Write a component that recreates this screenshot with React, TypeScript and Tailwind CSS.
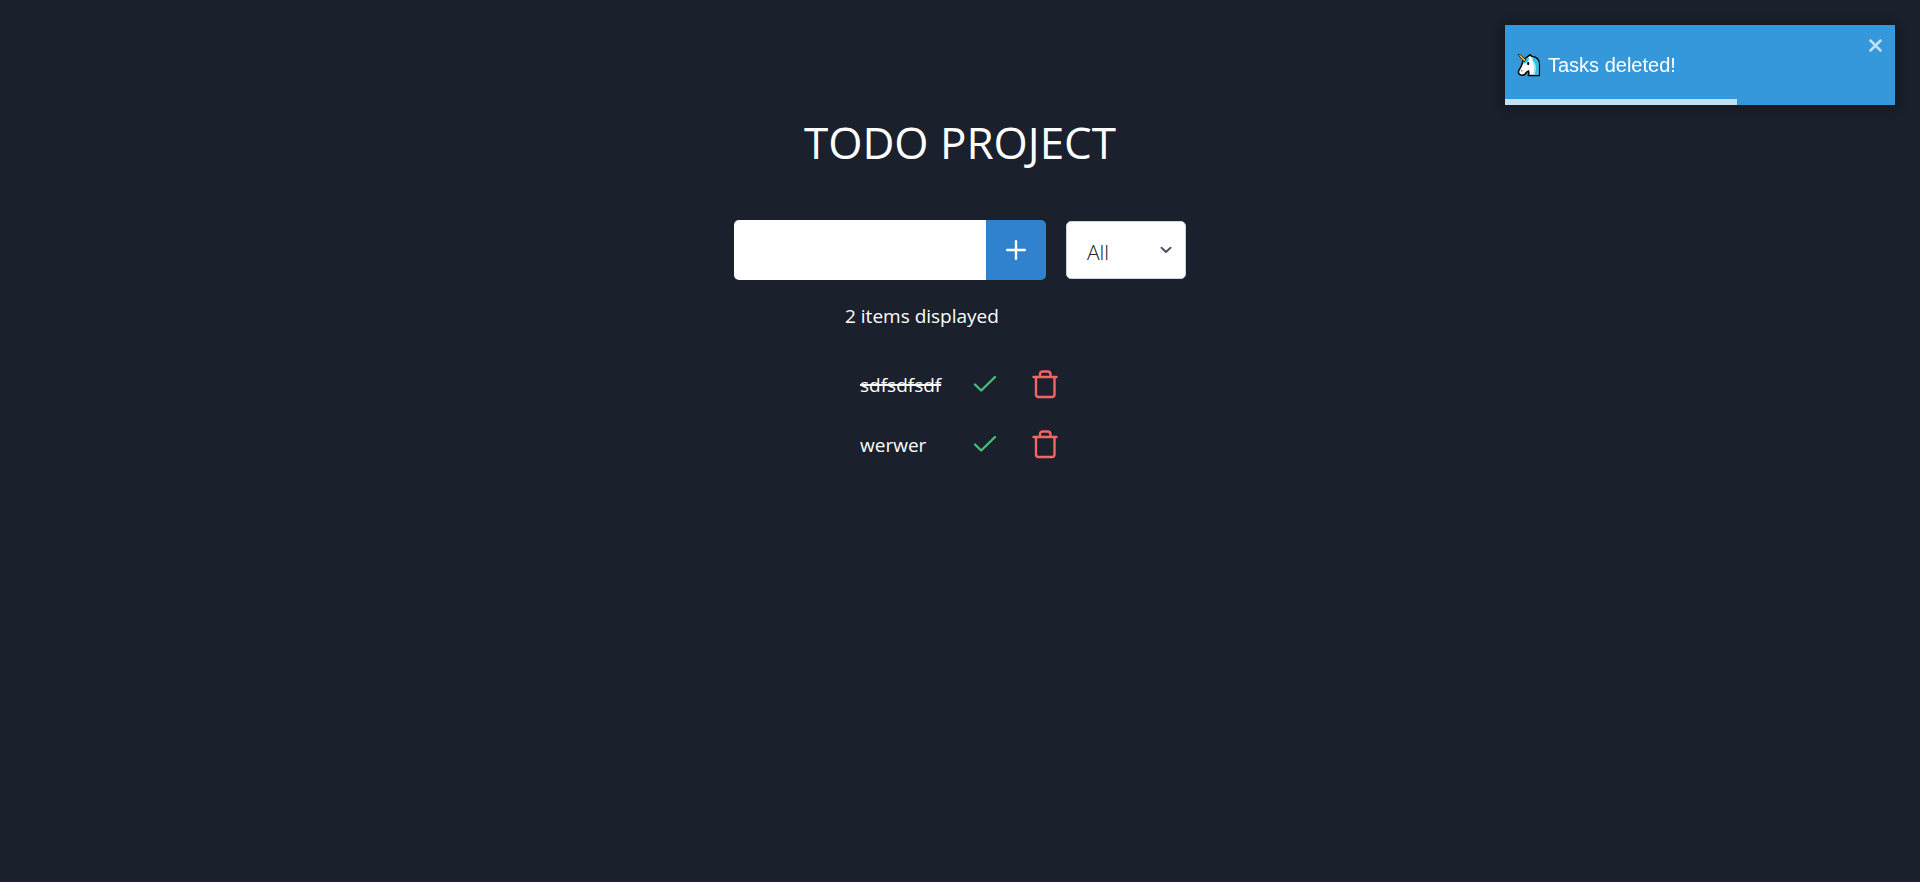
import { useState } from "react";

type Task = { id: number; title: string; done: boolean };

const TASKS: Task[] = [
  { id: 1, title: "sdfsdfsdf", done: true },
  { id: 2, title: "werwer", done: false },
];

function UnicornIcon() {
  return (
    <svg viewBox="0 0 24 24" className="size-6 shrink-0" aria-hidden="true">
      <path
        d="M6.500 7 10 4.200 13 1.800 15 3.400C19.500 3.800 22.300 7 22.300 11.500V22.400H11.300C12.200 20.500 12.300 19.300 11.600 18L9.300 19.300C8.600 21.300 6.600 22.500 4.500 22.200 2.200 21.800 1 20.200 1.600 18L4.300 13Z"
        fill="#fff"
        stroke="#000"
        strokeWidth="1.500"
        strokeLinejoin="round"
      />
      <path d="M15 4.200C19.200 4.600 21.500 7.600 21.500 11.500V21.600H17.500C18.800 17.500 18.600 13.500 17 10 16 8 15.500 6.500 15 4.200Z" fill="#1fc4e8" />
      <path d="M15.500 7C18 9.500 19 12 18.800 15 18.700 17.500 18.300 19.500 17.700 21.600H16C17.300 17 17.500 12.500 15.500 8.500Z" fill="#9be9f7" />
      <path d="M6.300 9.800C7.500 6.500 9.500 5 12.300 4.800 12.200 7.500 10.500 9.500 7 11Z" fill="#2fc8ea" />
      <path d="M1.100 1.900 3 1.300 9 6.800 7.200 8.800Z" fill="#f9b62a" stroke="#000" strokeWidth="0.700" strokeLinejoin="round" />
      <ellipse cx="11.200" cy="10.500" rx="1.100" ry="1.700" fill="#000" />
      <circle cx="4.700" cy="17.800" r="0.800" fill="#666" />
    </svg>
  );
}

function Toast({ onClose }: { onClose: () => void }) {
  return (
    <div
      role="alert"
      className="fixed top-[25px] right-[25px] flex h-20 w-[390px] items-center bg-[#3498db] px-3 font-['Liberation_Sans',Arial,sans-serif] text-xl text-white shadow-[0_1px_12px_2px_rgba(0,0,0,0.3)]"
    >
      <UnicornIcon />
      <span className="ml-[7px]">Tasks deleted!</span>
      <button type="button" aria-label="close" onClick={onClose} className="absolute top-[14px] right-[13px] text-white/70">
        <svg viewBox="0 0 13 13" className="size-[13px]" fill="none" stroke="currentColor" strokeWidth="2.500" strokeLinecap="round">
          <path d="M1.500 1.500 11.500 11.500M11.500 1.500 1.500 11.500" />
        </svg>
      </button>
      <div className="absolute bottom-0 left-0 h-[6px] w-[232px] bg-white/70" />
    </div>
  );
}

function CheckIcon() {
  return (
    <svg viewBox="0 0 30 30" className="size-[30px]" fill="none" stroke="#48bb78" strokeWidth="2.400" strokeLinecap="round" strokeLinejoin="round">
      <path d="M5 15.500 11.200 21.500 25 8" />
    </svg>
  );
}

function TrashIcon() {
  return (
    <svg viewBox="0 0 30 30" className="size-[30px]" fill="none" stroke="#f56565" strokeWidth="2.400" strokeLinecap="round" strokeLinejoin="round">
      <path d="M3.500 8H26.500M6 8V25.500Q6 28 8.500 28H22Q24.500 28 24.500 25.500V8M10 8V5.500Q10 2.500 13 2.500H17.500Q20.500 2.500 20.500 5.500V8" />
    </svg>
  );
}

export default function App() {
  const [tasks, setTasks] = useState(TASKS);
  const [title, setTitle] = useState("");
  const [filter, setFilter] = useState("all");
  const [toast, setToast] = useState(true);

  const shown = tasks.filter((t) => filter === "all" || (filter === "completed") === t.done);

  const add = () => {
    if (!title.trim()) return;
    setTasks([...tasks, { id: Date.now(), title, done: false }]);
    setTitle("");
  };

  return (
    <main className="flex min-h-screen flex-col items-center bg-[#1a202c] pt-27 font-['Open_Sans','Noto_Sans',sans-serif] text-[19px] leading-8 text-white">
      <h1 className="text-[44px] leading-[68px]">TODO PROJECT</h1>

      <form
        className="mt-11 flex items-center gap-5"
        onSubmit={(e) => {
          e.preventDefault();
          add();
        }}
      >
        <div className="flex h-[60px]">
          <input
            type="text"
            aria-label="New task"
            value={title}
            onChange={(e) => setTitle(e.target.value)}
            className="w-[252px] rounded-l-[5px] bg-white px-4 text-gray-800 outline-none"
          />
          <button type="submit" aria-label="Add task" className="flex w-[60px] items-center justify-center rounded-r-[5px] bg-[#3182ce]">
            <svg viewBox="0 0 20 20" className="size-5" stroke="#fff" strokeWidth="2.400" strokeLinecap="round">
              <path d="M10 1.200V18.800M1.200 10H18.800" />
            </svg>
          </button>
        </div>
        <div className="relative">
          <select
            aria-label="Filter tasks"
            value={filter}
            onChange={(e) => setFilter(e.target.value)}
            className="h-[58px] w-[120px] appearance-none rounded-[5px] border border-[#cbd5e0] bg-white pt-1 pl-5 text-[21px] font-light text-[#1a202c] outline-none"
          >
            <option value="all">All</option>
            <option value="completed">Completed</option>
            <option value="uncompleted">Uncompleted</option>
          </select>
          <svg viewBox="0 0 12 8" className="pointer-events-none absolute top-[25px] right-[14px] h-2 w-3" fill="none" stroke="#4a5568" strokeWidth="2" strokeLinecap="round" strokeLinejoin="round">
            <path d="M1.500 1.800 6 6 10.500 1.800" />
          </svg>
        </div>
      </form>

      <section className="mt-5">
        <p>{shown.length} items displayed</p>
        <ul className="mt-[22px]">
          {shown.map((task) => (
            <li key={task.id} className="flex h-[60px] items-center pl-[15px]">
              <span className={task.done ? "w-[95px] pt-[2px] line-through decoration-2" : "w-[95px] pt-[2px]"}>{task.title}</span>
              <button
                type="button"
                aria-label={`Complete ${task.title}`}
                onClick={() => setTasks(tasks.map((t) => (t.id === task.id ? { ...t, done: !t.done } : t)))}
                className="flex size-[60px] items-center justify-center"
              >
                <CheckIcon />
              </button>
              <button
                type="button"
                aria-label={`Delete ${task.title}`}
                onClick={() => setTasks(tasks.filter((t) => t.id !== task.id))}
                className="flex size-[60px] items-center justify-center"
              >
                <TrashIcon />
              </button>
            </li>
          ))}
        </ul>
      </section>

      {toast && <Toast onClose={() => setToast(false)} />}
    </main>
  );
}
